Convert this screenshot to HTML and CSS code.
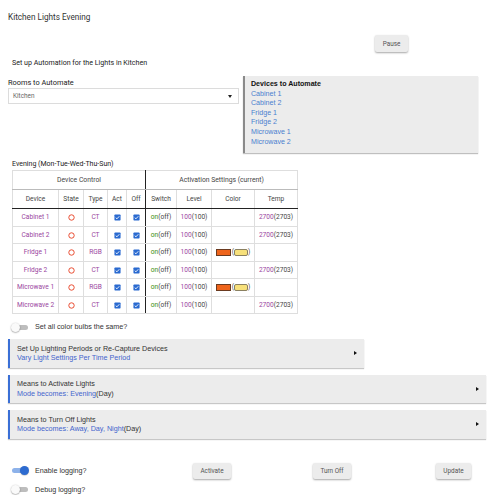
FILE: index.html
```html
<!DOCTYPE html>
<html>
<head>
<meta charset="utf-8">
<link rel="stylesheet" href="styles.css">
</head>
<body>
<div class="page">
  <div class="title">Kitchen Lights Evening</div>
  <div class="pause-row"><button class="btn">Pause</button></div>
  <div class="intro">Set up Automation for the Lights in Kitchen</div>
  <div class="two-col">
    <div class="rooms">
      <div class="label">Rooms to Automate</div>
      <div class="select"><span>Kitchen</span><span class="caret"></span></div>
    </div>
    <div class="devices">
      <div class="dev-head">Devices to Automate</div>
      <div class="dev">Cabinet 1</div>
      <div class="dev">Cabinet 2</div>
      <div class="dev">Fridge 1</div>
      <div class="dev">Fridge 2</div>
      <div class="dev">Microwave 1</div>
      <div class="dev">Microwave 2</div>
    </div>
  </div>
  <div class="period">Evening (Mon-Tue-Wed-Thu-Sun)</div>
  <table class="grid">
    <colgroup>
      <col class="c-dev"><col class="c-state"><col class="c-type"><col class="c-act"><col class="c-off">
      <col class="c-sw"><col class="c-lvl"><col class="c-col"><col class="c-tmp">
    </colgroup>
    <thead>
      <tr class="h1"><th colspan="5" class="grp">Device Control</th><th colspan="4">Activation Settings (current)</th></tr>
      <tr class="h2"><th>Device</th><th>State</th><th>Type</th><th>Act</th><th class="grp">Off</th><th>Switch</th><th>Level</th><th>Color</th><th>Temp</th></tr>
    </thead>
    <tbody>
      <tr>
        <td class="pur">Cabinet 1</td>
        <td><svg class="ico" viewBox="0 0 8 8"><circle cx="4" cy="4" r="3.1" fill="none" stroke="#e8482c" stroke-width="1.1"/></svg></td>
        <td class="pur">CT</td>
        <td><svg class="ico" viewBox="0 0 8 8"><rect x="0.5" y="0.5" width="7" height="7" rx="0.8" fill="#2a6ad0"/><path d="M2 4.2 L3.4 5.5 L6 2.6" fill="none" stroke="#fff" stroke-width="1"/></svg></td>
        <td class="grp"><svg class="ico" viewBox="0 0 8 8"><rect x="0.5" y="0.5" width="7" height="7" rx="0.8" fill="#2a6ad0"/><path d="M2 4.2 L3.4 5.5 L6 2.6" fill="none" stroke="#fff" stroke-width="1"/></svg></td>
        <td><span class="on">on</span>(off)</td>
        <td><span class="pur">100</span>(100)</td>
        <td></td>
        <td><span class="pur">2700</span>(2703)</td>
      </tr>
      <tr>
        <td class="pur">Cabinet 2</td>
        <td><svg class="ico" viewBox="0 0 8 8"><circle cx="4" cy="4" r="3.1" fill="none" stroke="#e8482c" stroke-width="1.1"/></svg></td>
        <td class="pur">CT</td>
        <td><svg class="ico" viewBox="0 0 8 8"><rect x="0.5" y="0.5" width="7" height="7" rx="0.8" fill="#2a6ad0"/><path d="M2 4.2 L3.4 5.5 L6 2.6" fill="none" stroke="#fff" stroke-width="1"/></svg></td>
        <td class="grp"><svg class="ico" viewBox="0 0 8 8"><rect x="0.5" y="0.5" width="7" height="7" rx="0.8" fill="#2a6ad0"/><path d="M2 4.2 L3.4 5.5 L6 2.6" fill="none" stroke="#fff" stroke-width="1"/></svg></td>
        <td><span class="on">on</span>(off)</td>
        <td><span class="pur">100</span>(100)</td>
        <td></td>
        <td><span class="pur">2700</span>(2703)</td>
      </tr>
      <tr>
        <td class="pur">Fridge 1</td>
        <td><svg class="ico" viewBox="0 0 8 8"><circle cx="4" cy="4" r="3.1" fill="none" stroke="#e8482c" stroke-width="1.1"/></svg></td>
        <td class="pur">RGB</td>
        <td><svg class="ico" viewBox="0 0 8 8"><rect x="0.5" y="0.5" width="7" height="7" rx="0.8" fill="#2a6ad0"/><path d="M2 4.2 L3.4 5.5 L6 2.6" fill="none" stroke="#fff" stroke-width="1"/></svg></td>
        <td class="grp"><svg class="ico" viewBox="0 0 8 8"><rect x="0.5" y="0.5" width="7" height="7" rx="0.8" fill="#2a6ad0"/><path d="M2 4.2 L3.4 5.5 L6 2.6" fill="none" stroke="#fff" stroke-width="1"/></svg></td>
        <td><span class="on">on</span>(off)</td>
        <td><span class="pur">100</span>(100)</td>
        <td class="colr"><span class="sw orange"></span>(<span class="sw yellow"></span>)</td>
        <td></td>
      </tr>
      <tr>
        <td class="pur">Fridge 2</td>
        <td><svg class="ico" viewBox="0 0 8 8"><circle cx="4" cy="4" r="3.1" fill="none" stroke="#e8482c" stroke-width="1.1"/></svg></td>
        <td class="pur">CT</td>
        <td><svg class="ico" viewBox="0 0 8 8"><rect x="0.5" y="0.5" width="7" height="7" rx="0.8" fill="#2a6ad0"/><path d="M2 4.2 L3.4 5.5 L6 2.6" fill="none" stroke="#fff" stroke-width="1"/></svg></td>
        <td class="grp"><svg class="ico" viewBox="0 0 8 8"><rect x="0.5" y="0.5" width="7" height="7" rx="0.8" fill="#2a6ad0"/><path d="M2 4.2 L3.4 5.5 L6 2.6" fill="none" stroke="#fff" stroke-width="1"/></svg></td>
        <td><span class="on">on</span>(off)</td>
        <td><span class="pur">100</span>(100)</td>
        <td></td>
        <td><span class="pur">2700</span>(2703)</td>
      </tr>
      <tr>
        <td class="pur">Microwave 1</td>
        <td><svg class="ico" viewBox="0 0 8 8"><circle cx="4" cy="4" r="3.1" fill="none" stroke="#e8482c" stroke-width="1.1"/></svg></td>
        <td class="pur">RGB</td>
        <td><svg class="ico" viewBox="0 0 8 8"><rect x="0.5" y="0.5" width="7" height="7" rx="0.8" fill="#2a6ad0"/><path d="M2 4.2 L3.4 5.5 L6 2.6" fill="none" stroke="#fff" stroke-width="1"/></svg></td>
        <td class="grp"><svg class="ico" viewBox="0 0 8 8"><rect x="0.5" y="0.5" width="7" height="7" rx="0.8" fill="#2a6ad0"/><path d="M2 4.2 L3.4 5.5 L6 2.6" fill="none" stroke="#fff" stroke-width="1"/></svg></td>
        <td><span class="on">on</span>(off)</td>
        <td><span class="pur">100</span>(100)</td>
        <td class="colr"><span class="sw orange"></span>(<span class="sw yellow"></span>)</td>
        <td></td>
      </tr>
      <tr>
        <td class="pur">Microwave 2</td>
        <td><svg class="ico" viewBox="0 0 8 8"><circle cx="4" cy="4" r="3.1" fill="none" stroke="#e8482c" stroke-width="1.1"/></svg></td>
        <td class="pur">CT</td>
        <td><svg class="ico" viewBox="0 0 8 8"><rect x="0.5" y="0.5" width="7" height="7" rx="0.8" fill="#2a6ad0"/><path d="M2 4.2 L3.4 5.5 L6 2.6" fill="none" stroke="#fff" stroke-width="1"/></svg></td>
        <td class="grp"><svg class="ico" viewBox="0 0 8 8"><rect x="0.5" y="0.5" width="7" height="7" rx="0.8" fill="#2a6ad0"/><path d="M2 4.2 L3.4 5.5 L6 2.6" fill="none" stroke="#fff" stroke-width="1"/></svg></td>
        <td><span class="on">on</span>(off)</td>
        <td><span class="pur">100</span>(100)</td>
        <td></td>
        <td><span class="pur">2700</span>(2703)</td>
      </tr>
    </tbody>
  </table>
  <div class="toggle-row first"><span class="toggle"><span class="knob"></span></span><span class="tlabel">Set all color bulbs the same?</span></div>
  <div class="panel short">
    <div class="pbody">
      <div class="ptitle">Set Up Lighting Periods or Re-Capture Devices</div>
      <div class="psub">Vary Light Settings Per Time Period</div>
    </div>
    <span class="arrow"></span>
  </div>
  <div class="panel">
    <div class="pbody">
      <div class="ptitle">Means to Activate Lights</div>
      <div class="psub">Mode becomes: Evening<span class="dark">(Day)</span></div>
    </div>
    <span class="arrow"></span>
  </div>
  <div class="panel">
    <div class="pbody">
      <div class="ptitle">Means to Turn Off Lights</div>
      <div class="psub">Mode becomes: Away, Day, Night<span class="dark">(Day)</span></div>
    </div>
    <span class="arrow"></span>
  </div>
  <div class="footer">
    <div class="toggle-row"><span class="toggle on-t"><span class="knob"></span></span><span class="tlabel">Enable logging?</span></div>
    <button class="btn fbtn">Activate</button>
    <button class="btn fbtn">Turn Off</button>
    <button class="btn fbtn">Update</button>
    <div class="toggle-row"><span class="toggle"><span class="knob"></span></span><span class="tlabel">Debug logging?</span></div>
  </div>
</div>
</body>
</html>
```
FILE: styles.css
```css
html, body { margin: 0; padding: 0; background: #fff; }
.page { padding: 0 8px; font-family: Roboto, "Liberation Sans", sans-serif; color: #222; }
.title { padding-top: 11px; line-height: 12px; font-size: 8.2px; color: #333; }
.pause-row { margin-top: 12px; display: flex; justify-content: flex-end; padding-right: 80px; }
.btn { font-family: Roboto, sans-serif; font-size: 6.4px; color: #555; background: #ececec; border: none; border-radius: 2px; box-shadow: 0 1px 2px rgba(0,0,0,0.35); padding: 0; height: 17px; width: 33px; }
.intro { margin-top: 6px; padding-left: 4px; line-height: 10px; font-size: 7.1px; color: #222; }
.two-col { margin-top: 8px; display: flex; align-items: flex-start; gap: 4px; }
.rooms { width: 231px; }
.label { margin-top: 2px; line-height: 10px; font-size: 7.4px; color: #222; }
.select { height: 16px; box-sizing: border-box; border: 1px solid #dcdcdc; display: flex; align-items: center; justify-content: space-between; padding: 0 6px 0 4px; font-size: 6.4px; color: #666; }
.caret { width: 0; height: 0; border-left: 2.5px solid transparent; border-right: 2.5px solid transparent; border-top: 3px solid #222; }
.devices { width: 235px; height: 77px; box-sizing: border-box; background: #ececec; border-left: 2px solid #8a8a8a; box-shadow: 0 1px 1px rgba(0,0,0,0.25); padding: 4px 0 0 6px; font-family: "Liberation Sans", Arial, sans-serif; font-size: 7.1px; line-height: 9.6px; }
.dev-head { font-weight: bold; color: #111; }
.dev { color: #4a7fcf; }
.period { margin-top: 6px; padding-left: 4px; line-height: 10px; font-size: 7px; color: #222; }
.grid { margin: 1px 0 0 4px; border-collapse: collapse; table-layout: fixed; width: 285px; border: 1px solid #222; font-size: 6.6px; color: #444; }
.c-dev { width: 46px; } .c-state { width: 25px; } .c-type { width: 24px; } .c-act { width: 19px; } .c-off { width: 19px; }
.c-sw { width: 31px; } .c-lvl { width: 35px; } .c-col { width: 43px; } .c-tmp { width: 43px; }
.grid th, .grid td { border: 1px solid #dedede; text-align: center; padding: 0; font-weight: normal; white-space: nowrap; }
.grid th { color: #444; }
.grid tr.h1 th { height: 18px; border-bottom-color: #bbb; font-size: 6.8px; }
.grid tr.h2 th { height: 18px; border-bottom: 1px solid #222; }
.grid td { height: 16.5px; }
.grid .grp { border-right: 1px solid #222; }
.pur { color: #9a46a0; }
.on { color: #3a8c0a; }
.ico { width: 7px; height: 7px; display: inline-block; vertical-align: middle; }
.colr { font-size: 6.6px; }
.sw { display: inline-block; vertical-align: middle; height: 7px; box-sizing: border-box; }
.orange { width: 15px; background: #ee641b; border: 1px solid #6a3a20; margin-right: 1px; }
.yellow { width: 14px; background: #f7e07a; border: 1px solid #8a8060; border-radius: 2px; }
.toggle-row { display: flex; align-items: center; gap: 7px; padding-left: 4px; line-height: 10px; font-family: "Liberation Sans", Arial, sans-serif; font-size: 7.2px; color: #333; }
.toggle-row.first { margin-top: 8px; }
.toggle { position: relative; width: 16px; height: 5px; border-radius: 3px; background: #bdbdbd; flex: none; }
.knob { position: absolute; left: -1px; top: -2px; width: 9px; height: 9px; border-radius: 50%; background: #fafafa; box-shadow: 0 0.5px 1.5px rgba(0,0,0,0.45); }
.toggle.on-t { background: #8db2ea; }
.toggle.on-t .knob { left: auto; right: -1px; background: #2d6bd0; box-shadow: 0 0.5px 1px rgba(0,0,0,0.3); }
.panel { margin-top: 7px; width: 478px; height: 28.5px; box-sizing: border-box; background: #ececec; border-left: 2px solid #3a6fd6; box-shadow: 0 1px 1px rgba(0,0,0,0.22); display: flex; align-items: center; padding: 0 7px 0 7px; font-family: "Liberation Sans", Arial, sans-serif; font-size: 7.2px; line-height: 9.5px; }
.panel.short { width: 356px; }
.pbody { flex: 1; }
.ptitle { color: #333; }
.psub { color: #4465cc; }
.dark { color: #333; }
.arrow { width: 0; height: 0; border-left: 3.5px solid #111; border-top: 2.5px solid transparent; border-bottom: 2.5px solid transparent; }
.footer { margin-top: 24px; display: grid; grid-template-columns: 120px 120px 120px 120px; row-gap: 6px; align-items: center; }
.fbtn { justify-self: end; margin-right: 17px; width: 38px; height: 16px; }
.fbtn:last-of-type { width: 35px; }
```
